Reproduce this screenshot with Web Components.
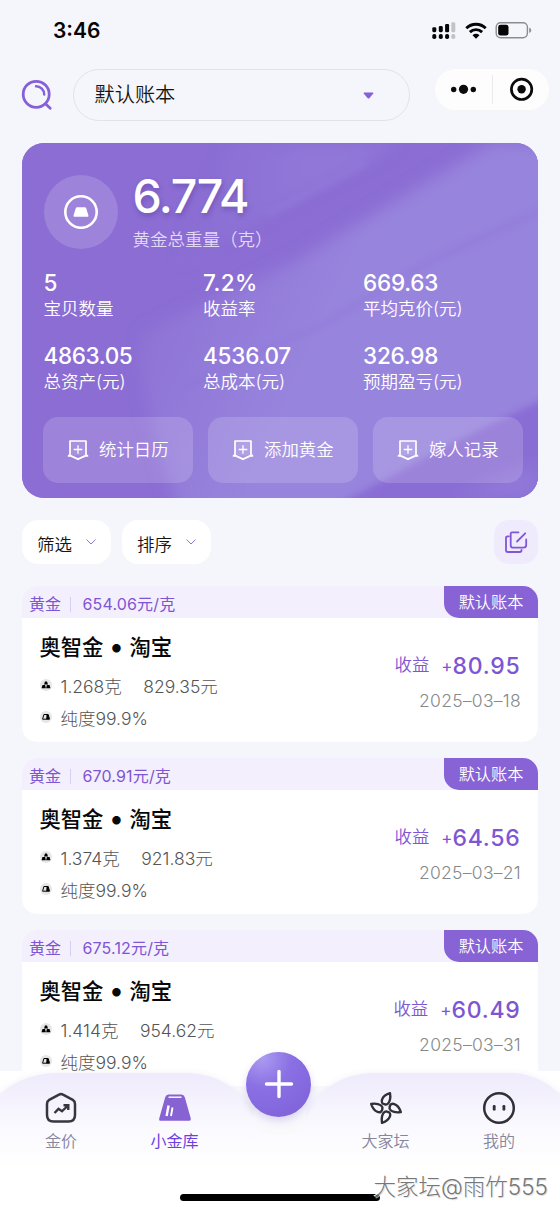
<!DOCTYPE html>
<html lang="zh-CN">
<head>
<meta charset="utf-8">
<title>小金库</title>
<style>
html,body{margin:0;padding:0}
body{width:560px;height:1212px;overflow:hidden;background:#f5f6fb;font-family:Inter,"Noto Sans CJK SC",sans-serif;color:#111;-webkit-font-smoothing:antialiased}
</style>
</head>
<body>
<gold-app></gold-app>
<script>
const define = (name, html) => {
  const t = document.createElement('template');
  t.innerHTML = html;
  customElements.define(name, class extends HTMLElement {
    constructor() {
      super();
      this.attachShadow({ mode: 'open' }).append(t.content.cloneNode(true));
    }
    connectedCallback() {
      this.shadowRoot.querySelectorAll('[data-attr]').forEach(el => {
        el.textContent = this.getAttribute(el.dataset.attr) || '';
      });
    }
  });
};

define('status-bar', `<style>
:host{display:flex;height:69px;box-sizing:border-box;padding:17px 28px 0 53px;justify-content:space-between}
.time{font-size:21px;line-height:28px;font-weight:600;letter-spacing:0;color:#050505}
svg{display:block;margin-top:4px}
</style>
<div class="time">3:46</div>
<svg width="100" height="20" viewBox="0 0 100 20">
 <g fill="#050505"><rect x="0.3" y="6.2" width="4" height="5" rx="1.4"/><rect x="6.8" y="5" width="4" height="6.2" rx="1.4"/><rect x="13.1" y="3" width="4" height="8.2" rx="1.2"/>
 <rect x="0.3" y="13" width="4" height="5" rx="1.8"/><rect x="6.8" y="13" width="4" height="5" rx="1.8"/><rect x="13.1" y="13" width="4" height="5" rx="1.8"/></g>
 <g fill="#c3c3c7"><rect x="19.3" y="1.2" width="4" height="10" rx="1.2"/><rect x="19.3" y="13" width="4" height="5" rx="1.8"/></g>
 <g fill="none" stroke="#050505" stroke-width="2.9"><path d="M34.3 7.2a14 14 0 0 1 19.4 0"/><path d="M37.9 11.1a8.8 8.8 0 0 1 12.2 0"/></g>
 <path d="M40.5 14.2a5 5 0 0 1 7 0L44 17.8z" fill="#050505"/>
 <rect x="64.2" y="1.7" width="31.2" height="15" rx="4.4" fill="none" stroke="#8d8d90" stroke-width="1.4"/>
 <rect x="66.2" y="3.8" width="10.3" height="10.8" rx="2.4" fill="#050505"/>
 <path d="M97.2 6.6q2 .8 2 2.7t-2 2.7z" fill="#8d8d90"/>
</svg>`);

define('top-bar', `<style>
:host{display:flex;height:52px;padding:0 10px 0 21px;align-items:flex-start}
.search{display:block;margin:10px 20px 0 0}
.select{width:337px;height:52px;box-sizing:border-box;border:1px solid #e2e2ea;border-radius:26px;display:flex;align-items:center;justify-content:space-between;padding:0 35px 0 20.5px}
.select span{font-size:20.2px;line-height:28px;color:#161616;font-weight:350}
.capsule{margin:-1px 0 0 24px;width:116px;height:43px;border-radius:22px;background:#fdfdfe;box-shadow:inset 0 0 0 1px #f5f5f8;display:block}
</style>
<svg class="search" width="32" height="32" viewBox="0 0 32 32" fill="none" stroke="#8660d8" stroke-width="2.8" stroke-linecap="round"><circle cx="15.2" cy="15.3" r="13"/><path d="M25 25.2l4.2 4"/><path d="M15 7.2a8.2 8.2 0 0 1 8.2 8.3" stroke-width="2.4"/></svg>
<div class="select"><span>默认账本</span><svg width="11" height="7" viewBox="0 0 11 7"><path d="M1.2.4h8.6q1.2.2.5 1.2L6.5 6Q5.500 7 4.500 6L.7 1.600Q0 .6 1.200.4z" fill="#8660d8"/></svg></div>
<svg class="capsule" viewBox="0 0 116 43"><g fill="#0b0b0b"><circle cx="19.700" cy="21.500" r="2.700"/><circle cx="29.500" cy="21.300" r="4.600"/><circle cx="39.300" cy="21.500" r="2.700"/><circle cx="87.600" cy="21.300" r="4.200"/></g><circle cx="87.600" cy="21.300" r="10.200" fill="none" stroke="#0b0b0b" stroke-width="2.700"/><path d="M58.500 7v29" stroke="#e9e9ee"/></svg>`);

define('stat-cell', `<style>
:host{display:block;height:73px;color:#fff}
.v{font-size:22.5px;line-height:28px;font-weight:500;letter-spacing:var(--ls,-.2px)}
.l{font-size:17.5px;line-height:24px;font-weight:350;white-space:nowrap}
</style><div class="v" data-attr="value"></div><div class="l" data-attr="label"></div>`);

define('action-button', `<style>
:host{display:flex;height:66px;border-radius:15px;background:rgba(255,255,255,.155);align-items:center;color:#fff;padding-left:24px;box-sizing:border-box}
svg{display:block;margin-right:10px}
span{font-size:17.4px;line-height:24px;font-weight:350;white-space:nowrap}
</style>
<svg width="22" height="22" viewBox="0 0 22 22" fill="none" stroke="#fff" stroke-width="1.700" stroke-linejoin="round"><path d="M3 16.500V2h16v14.500" fill="rgba(255,255,255,.12)"/><path d="M.8 16.700q1.300.1 2.400 0L11 20.200l7.800-3.500q1.100.1 2.400 0" stroke-width="2"/><path d="M11 6.200v8.600M6.700 10.500h8.600" stroke-width="1.300"/></svg><span><slot></slot></span>`);

define('summary-card', `<style>
:host{display:block;margin:22px 22px 0;height:355px;border-radius:22px;overflow:hidden;background:#8b6dd3}
.wrap{display:grid;height:355px}
.bg,.body{grid-area:1/1}
.bg{display:block}
.body{z-index:1;padding:32px 14px 0 21.500px;display:flex;flex-direction:column}
.hero{display:flex;height:94px}
.disc{width:74px;height:74px;border-radius:50%;background:rgba(255,255,255,.155);display:flex;align-items:center;justify-content:center;margin-right:15px}
.num{font-size:46.500px;line-height:48px;margin-top:-3px;font-weight:550;letter-spacing:-1.450px;color:#fff;text-shadow:1px 3px 5px rgba(70,40,140,.35)}
.cap{font-size:17.500px;line-height:24px;margin-top:8px;font-weight:350;color:#e2d9f8}
.stats{display:grid;grid-template-columns:159.500px 160px 150px;grid-auto-rows:73px;height:148px}
.actions{display:grid;grid-template-columns:150px 150px 150px;gap:15px;margin-left:-.5px}
</style>
<div class="wrap">
<svg class="bg" width="516" height="355" viewBox="0 0 516 355">
 <defs>
  <linearGradient id="a" x1="100" y1="90" x2="300" y2="180" gradientUnits="userSpaceOnUse"><stop offset="0" stop-color="#9784dd" stop-opacity="0"/><stop offset="1" stop-color="#9784dd"/></linearGradient>
  <linearGradient id="b" x1="150" y1="0" x2="290" y2="0" gradientUnits="userSpaceOnUse"><stop offset="0" stop-color="#9581dd" stop-opacity="0"/><stop offset="1" stop-color="#9581dd"/></linearGradient>
  <filter id="f" x="-20%" y="-20%" width="140%" height="140%"><feGaussianBlur stdDeviation="8"/></filter>
  <filter id="s" x="-20%" y="-20%" width="140%" height="140%"><feGaussianBlur stdDeviation="3"/></filter>
 </defs>
 <rect width="516" height="355" fill="#8b6dd3"/>
 <path d="M120 190L270 120L470 0H560V400H170Q110 250 120 190z" fill="url(#a)" filter="url(#f)"/>
 <path d="M140 130L205 0H380L258 65L170 118z" fill="url(#b)" opacity=".55" filter="url(#f)"/>
 <path d="M245 72L345 20" stroke="#a08fe5" stroke-width="8" opacity=".18" filter="url(#s)"/>
 <path d="M160 245L300 182L405 120L520 67" stroke="#8b71d6" stroke-width="4" opacity=".38" fill="none" filter="url(#s)"/>
 <path d="M310 365L430 300L530 252V370z" fill="#8869d3" opacity=".85" filter="url(#s)"/>
 <path d="M430 355L516 318V355z" fill="#9784dd" opacity=".5" filter="url(#f)"/>
</svg>
<div class="body">
 <div class="hero">
  <div class="disc"><svg width="36" height="36" viewBox="0 0 36 36"><circle cx="18" cy="18" r="15.700" fill="none" stroke="#fff" stroke-width="2.600"/><path d="M14.200 13.200h7.600q1 0 1.400 1l2.200 7q.5 1.600-1 1.600H11.600q-1.500 0-1-1.600l2.200-7q.4-1 1.400-1z" fill="#fff"/></svg></div>
  <div><div class="num">6.774</div><div class="cap">黄金总重量（克）</div></div>
 </div>
 <div class="stats">
  <stat-cell value="5" label="宝贝数量"></stat-cell><stat-cell value="7.2%" label="收益率" style="--ls:.4px"></stat-cell><stat-cell value="669.63" label="平均克价(元)"></stat-cell>
  <stat-cell value="4863.05" label="总资产(元)" style="--ls:-.35px"></stat-cell><stat-cell value="4536.07" label="总成本(元)"></stat-cell><stat-cell value="326.98" label="预期盈亏(元)"></stat-cell>
 </div>
 <div class="actions"><action-button>统计日历</action-button><action-button>添加黄金</action-button><action-button>嫁人记录</action-button></div>
</div></div>`);

define('filter-chip', `<style>
:host{display:flex;width:89px;height:44px;box-sizing:border-box;padding:5px 15px 0;background:#fff;border-radius:16px;align-items:center;justify-content:space-between}
span{font-size:17.500px;line-height:24px;color:#161616;font-weight:350}
svg{display:block;margin-top:-6px}
</style><span><slot></slot></span><svg width="10" height="6" viewBox="0 0 10 6" fill="none" stroke="#8f70da" stroke-width="1"><path d="M.5.600L5 5L9.500.600"/></svg>`);

define('filter-row', `<style>
:host{display:flex;margin:22px 22px 22px;gap:11px;height:44px}
.edit{margin-left:auto;width:44px;height:44px;border-radius:15px;background:#efebfd;display:flex;align-items:center;justify-content:center}
</style><filter-chip>筛选</filter-chip><filter-chip>排序</filter-chip>
<div class="edit"><svg width="24" height="24" viewBox="0 0 24 24" fill="none" stroke="#8057d4" stroke-width="1.800" stroke-linecap="round" stroke-linejoin="round"><path d="M14.500 2.300H8Q6.700 2.300 6.700 3.600V15.200Q6.700 17.700 9.200 17.700H19.400Q22.200 17.700 22.200 15V9.500"/><path d="M5 6.300H3.700Q2 6.300 2 8V20.300Q2 22 3.700 22H15.800Q17.500 22 17.500 20.300V20"/><path d="M13 11.500L21.200 3.300"/></svg></div>`);

define('asset-card', `<style>
:host{display:block;margin:0 22px 16px;height:156px;border-radius:15px;background:#fff;overflow:hidden}
.head{height:32px;background:#f3effd;display:flex;color:#7e55d3;font-size:16px}
.type{margin:6px 0 0 7px;line-height:24px;width:32px}
.sep{width:1px;height:15px;background:#d8cdf5;margin:11px 11.500px 0 9px}
.rate{margin-top:6px;line-height:24px;letter-spacing:.15px}
.badge{margin-left:auto;width:94px;height:32px;background:#8763d6;color:#fff;border-bottom-left-radius:15px;text-align:center;line-height:32px;font-weight:350;font-size:16.200px}
.main{display:flex;justify-content:space-between;padding:14px 17px 0 17.500px}
.title{display:flex;align-items:center;font-size:21.300px;line-height:30px;font-weight:500;color:#080808}
.dot{width:26px;text-align:center;font-size:27px;line-height:30px}
.line{display:flex;align-items:center;height:32px;font-size:17.500px;font-weight:300;color:#555;line-height:24px}
.line svg{margin:-4px 9px 0 0;display:block}
.amount{margin-left:21.500px}
.title+.line{margin-top:8.500px}
.r{text-align:right;padding-top:20px}
.profit{display:flex;color:#7e55d3;height:28px;align-items:center;justify-content:flex-end;margin-right:.5px}
.profit .k{font-size:17.400px;font-weight:350;line-height:24px;margin:-3px 12px 0 0}
.profit .p{font-size:17px;line-height:28px;font-weight:400}
.profit .n{font-size:23px;line-height:28px;font-weight:550;letter-spacing:.75px}
.date{font-size:17.500px;line-height:24px;font-weight:300;color:#858a8a;margin-top:9px;letter-spacing:.28px}
</style>
<div class="head"><div class="type">黄金</div><div class="sep"></div><div class="rate" data-attr="rate"></div><div class="badge">默认账本</div></div>
<div class="main"><div><div class="title">奥智金<span class="dot">•</span>淘宝</div>
<div class="line"><svg width="12" height="12" viewBox="0 0 12 12"><circle cx="6" cy="6" r="6" fill="#e6e6e6"/><path d="M5 2.400h2l1 3H4zM2.500 6h2.600l.8 3.300H1.500zM6.900 6h2.600l1 3.300H6.100z" fill="#000"/></svg><span data-attr="weight"></span><span class="amount" data-attr="amount"></span></div>
<div class="line"><svg width="12" height="12" viewBox="0 0 12 12"><circle cx="6" cy="6" r="6" fill="#e6e6e6"/><path d="M3.900 3.500h4.300l1.300 4.700H2.600z" fill="none" stroke="#000" stroke-width="1"/><path d="M6.500 3.700h1.900l1 4.500H6.200z" fill="#000"/></svg><span>纯度99.9%</span></div></div>
<div class="r"><div class="profit"><span class="k">收益</span><span class="p">+</span><span class="n" data-attr="profit"></span></div><div class="date" data-attr="date"></div></div></div>`);

define('tab-item', `<style>
:host{display:flex;flex-direction:column;align-items:center;width:90px;color:#85859c;font-size:16px;font-weight:350}
:host([active]){color:#6b41e0;font-weight:400}
div{line-height:24px;margin-top:3px}
::slotted(svg){display:block}
</style><slot name="icon"></slot><div><slot></slot></div>`);

const blade = 'M15.800 14.300C10.500 13.800 12 6 21 3.200C22 8 20.500 12.800 18.500 14Q17.200 14.700 15.800 14.300z';
define('tab-bar', `<style>
:host{display:block;position:relative;height:141px;background:#fff}
.wrap{display:grid;height:141px}
.shape,.tabs{grid-area:1/1}
.shape{display:block;margin-top:-8px}
.tabs{z-index:1;display:flex;padding:19px 16px 0;justify-content:space-between;height:82px}
.grp{display:flex;gap:23.500px}
.fab{position:absolute;left:246px;top:-19.500px;width:65px;height:65px;border-radius:50%;z-index:3;background:radial-gradient(circle at 25% 10%,#ab9af0 0%,#8a70e4 38%,#8366dc 75%,#8462d6 100%);box-shadow:0 4px 8px rgba(100,70,190,.2);display:flex;align-items:center;justify-content:center}
.home{position:absolute;left:180px;top:123px;width:200px;height:7px;border-radius:4px;background:#000;z-index:2}
.mark{position:absolute;left:373.500px;top:100px;z-index:4;font-size:22.500px;line-height:32px;font-weight:300;color:#777;white-space:nowrap;text-shadow:-1px -1px 0 #fff,1px 1px 1px #ddd}
</style>
<div class="wrap">
<svg class="shape" width="560" height="149" viewBox="0 0 560 149"><defs><linearGradient id="g" x1="0" y1="8" x2="0" y2="108" gradientUnits="userSpaceOnUse"><stop offset="0" stop-color="#eeeafc"/><stop offset=".55" stop-color="#faf9fe"/><stop offset="1" stop-color="#fff"/></linearGradient><filter id="d" x="-10%" y="-20%" width="120%" height="140%"><feGaussianBlur stdDeviation="3"/></filter></defs>
<rect y="8" width="560" height="141" fill="#fff"/>
<path d="M225 23H333V50C318 56 310 70 280 70C250 70 240 56 225 50z" fill="#f8f8fc"/>
<path d="M-5 36Q20 10 60 10H185C222 10 246 32 253 54C259 66 268 72 280 72C292 72 301 66 307 54C314 32 338 10 375 10H510Q540 10 565 36V149H-5z" fill="#a9a3c8" opacity=".16" filter="url(#d)"/>
<path d="M253 54C259 66 268 72 280 72C292 72 301 66 307 54L300 23H260z" fill="#f9f9fc"/>
<path d="M-5 36Q20 10 60 10H185C222 10 246 32 253 54C259 66 268 72 280 72C292 72 301 66 307 54C314 32 338 10 375 10H510Q540 10 565 36V149H-5z" fill="url(#g)"/>
</svg>
<div class="tabs"><div class="grp">
<tab-item><svg slot="icon" width="34" height="36" viewBox="0 0 34 36" fill="none" stroke="#36363c" stroke-linejoin="round" stroke-linecap="round"><path d="M15 4.600Q17 3.300 19 4.600L28.800 9.900Q31 11.200 31 14V25Q31 31.500 24.500 31.500H9.500Q3 31.500 3 25V14Q3 11.200 5.200 9.900z" stroke-width="2.500"/><path d="M10.500 23L14.500 18.800L18 21.300L24 15.500M19.500 15.200H24.300V20" stroke-width="2.400" stroke-linejoin="miter" stroke-linecap="butt"/></svg>金价</tab-item>
<tab-item active><svg slot="icon" width="34" height="36" viewBox="0 0 34 36"><path d="M10.500 4.500h13q2.500 0 3.300 2.700l6 21.300q.5 2.300-1.600 2.300H2.800q-2.100 0-1.600-2.300l6-21.300q.8-2.700 3.300-2.700z" fill="#8662d3"/><path d="M10.500 7.200h13" stroke="#fff" stroke-width="1.400"/><path d="M10.600 15.500l-2 10.500" stroke="#fff" stroke-width="2.400"/><path d="M14.500 17.500l-1.500 8.500" stroke="#fff" stroke-width="1.900"/></svg>小金库</tab-item></div>
<div class="grp"><tab-item><svg slot="icon" width="34" height="36" viewBox="0 0 34 36"><g fill="none" stroke="#303036" stroke-width="2.400" stroke-linejoin="round"><path d="${blade}"/><path d="${blade}" transform="rotate(90 17 18)"/><path d="${blade}" transform="rotate(180 17 18)"/><path d="${blade}" transform="rotate(270 17 18)"/></g></svg>大家坛</tab-item>
<tab-item><svg slot="icon" width="34" height="36" viewBox="0 0 34 36"><circle cx="17" cy="18" r="14.800" fill="none" stroke="#303036" stroke-width="2.500"/><g fill="#303036"><rect x="10.800" y="15" width="2.800" height="5.600" rx="1.200"/><rect x="20.500" y="15" width="2.800" height="5.600" rx="1.200"/></g></svg>我的</tab-item></div></div></div>
<div class="fab"><svg width="30" height="30" viewBox="0 0 30 30" stroke="#fff" stroke-width="3.400" stroke-linecap="round"><path d="M15 2.500v25M2.500 15h25"/></svg></div>
<div class="home"></div>
<div class="mark">大家坛@雨竹555</div>`);

define('gold-app', `<style>
:host{display:block;width:560px;height:1212px}
main{height:1071px;overflow:hidden}
</style>
<main><status-bar></status-bar><top-bar></top-bar><summary-card></summary-card><filter-row></filter-row>
<asset-card rate="654.06元/克" weight="1.268克" amount="829.35元" profit="80.95" date="2025–03–18"></asset-card>
<asset-card rate="670.91元/克" weight="1.374克" amount="921.83元" profit="64.56" date="2025–03–21"></asset-card>
<asset-card rate="675.12元/克" weight="1.414克" amount="954.62元" profit="60.49" date="2025–03–31"></asset-card></main>
<tab-bar></tab-bar>`);
</script>
</body>
</html>
